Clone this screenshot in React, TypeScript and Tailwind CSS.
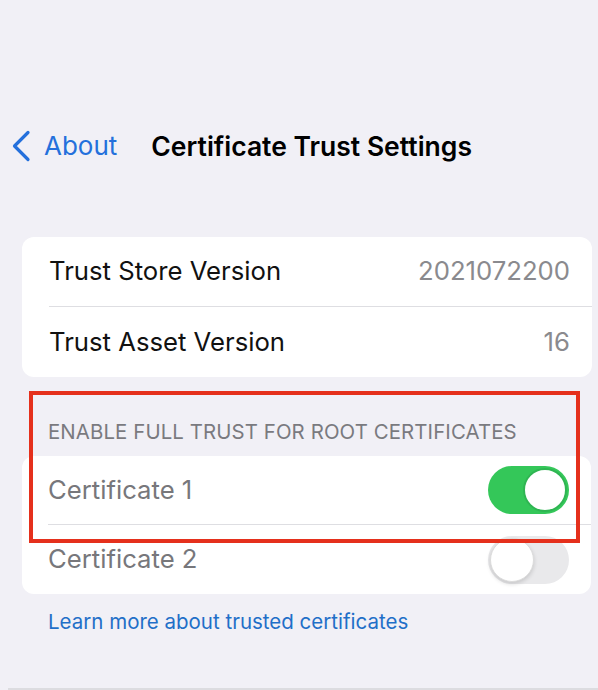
import React from "react";

const FONT = { fontFamily: "Inter, 'Noto Sans', sans-serif" };

function Toggle({ on }: { on: boolean }) {
  return on ? (
    <div className="flex h-[48px] w-[81px] items-center justify-end rounded-full bg-[#34c759] p-[2px]">
      <div className="h-[44px] w-[44px] rounded-full border-2 border-[#2fb552] bg-white" />
    </div>
  ) : (
    <div className="flex h-[48px] w-[81px] items-center justify-start rounded-full bg-[#e9e9eb] p-[2px]">
      <div className="h-[44px] w-[44px] rounded-full border border-[#dcdcdc] bg-white shadow-[0_2px_4px_rgba(0,0,0,0.15)]" />
    </div>
  );
}

function InfoRow({ label, value, divider }: { label: string; value: string; divider?: boolean }) {
  return (
    <div className="pl-[27px]">
      <div
        className={`flex h-[70px] items-center justify-between pr-[22px] ${divider ? "border-b border-[#dedee2]" : ""}`}
      >
        <span className="text-[25.7px] text-[#111]">{label}</span>
        <span className="text-[25.7px] text-[#8a8a8e]">{value}</span>
      </div>
    </div>
  );
}

function CertRow({ label, on, divider }: { label: string; on: boolean; divider?: boolean }) {
  return (
    <div className="pl-[26px]">
      <div
        className={`flex h-[69px] items-center justify-between pr-[22px] ${divider ? "border-b border-[#dedee2]" : ""}`}
      >
        <span className="text-[25.7px] text-[#77777b]">{label}</span>
        <Toggle on={on} />
      </div>
    </div>
  );
}

export default function App() {
  return (
    <div className="relative h-[690px] w-[598px] overflow-hidden bg-[#f1f0f6]" style={FONT}>
      {/* Nav bar */}
      <div className="flex items-center pt-[128px] pl-[11px]">
        <svg width="20" height="32" viewBox="0 0 20 32" className="mr-[13px]">
          <path
            d="M17 2.5 L3.5 16 L17 29.5"
            fill="none"
            stroke="#2470dc"
            strokeWidth="3.2"
            strokeLinecap="round"
            strokeLinejoin="round"
          />
        </svg>
        <span className="text-[26px] leading-[36px] text-[#2470dc]">About</span>
        <span className="ml-[34px] text-[26.5px] font-semibold leading-[36px] text-black">
          Certificate Trust Settings
        </span>
      </div>

      {/* Versions card */}
      <div className="ml-[22px] mr-[6px] mt-[73px] rounded-[12px] bg-white">
        <InfoRow label="Trust Store Version" value="2021072200" divider />
        <InfoRow label="Trust Asset Version" value="16" />
      </div>

      {/* Section header */}
      <div className="mt-[43px] pl-[48px] text-[20.4px] leading-[24px] tracking-[0.1px] text-[#7a7a7f]">
        ENABLE FULL TRUST FOR ROOT CERTIFICATES
      </div>

      {/* Certificates card */}
      <div className="ml-[22px] mr-[7px] mt-[12px] rounded-[12px] bg-white">
        <CertRow label="Certificate 1" on divider />
        <CertRow label="Certificate 2" on={false} />
      </div>

      <div className="mt-[15px] pl-[48px] text-[20.5px] leading-[26px] text-[#1f6fc8]">
        Learn more about trusted certificates
      </div>

      {/* Bottom bar edge */}
      <div className="absolute bottom-0 left-[8px] right-0 h-[2px] bg-[#dcdce0]" />

      {/* Annotation highlight */}
      <div className="pointer-events-none absolute left-[29px] top-[391px] h-[152px] w-[551px] border-[4px] border-[#e5301c]" />
    </div>
  );
}
